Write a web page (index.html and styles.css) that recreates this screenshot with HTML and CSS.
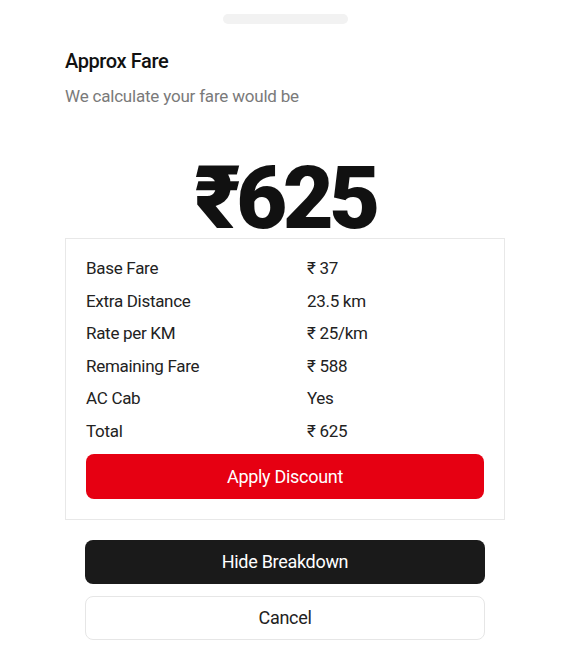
FILE: index.html
```html
<!DOCTYPE html>
<html>

<head>
    <title>Approx Fare</title>
    <link rel="stylesheet" href="styles.css">
</head>

<body>
    <div class="sheet">
        <div class="handle"></div>

        <h1 class="title">Approx Fare</h1>
        <p class="subtitle">We calculate your fare would be</p>

        <div class="amount">₹625</div>

        <div class="breakdown">
            <div class="rows">
                <span>Base Fare</span><span>₹ 37</span>
                <span>Extra Distance</span><span>23.5 km</span>
                <span>Rate per KM</span><span>₹ 25/km</span>
                <span>Remaining Fare</span><span>₹ 588</span>
                <span>AC Cab</span><span>Yes</span>
                <span>Total</span><span>₹ 625</span>
            </div>
            <div class="btn btn-red">Apply Discount</div>
        </div>

        <div class="actions">
            <div class="btn btn-dark">Hide Breakdown</div>
            <div class="btn btn-light">Cancel</div>
        </div>
    </div>
</body>

</html>
```

FILE: styles.css
```css
body {
    margin: 0;
    background: #ffffff;
    font-family: Roboto, "Noto Sans", sans-serif;
    color: #1a1a1a;
}

.sheet {
    padding: 14px 59px 0 65px;
}

.handle {
    width: 125px;
    height: 10px;
    margin: 0 0 0 158px;
    border-radius: 5px;
    background-color: #f2f2f2;
}

.title {
    margin: 25px 0 0 0;
    font-size: 20px;
    line-height: 24px;
    font-weight: 500;
    letter-spacing: -0.4px;
    color: #111111;
}

.subtitle {
    margin: 11px 0 0 0;
    font-size: 17px;
    line-height: 24px;
    font-weight: 400;
    letter-spacing: -0.2px;
    color: #7a7a7a;
}

.amount {
    margin-top: 49px;
    width: 440px;
    text-align: center;
    font-size: 88px;
    line-height: 81px;
    font-weight: 900;
    letter-spacing: -4.5px;
    color: #111111;
}

.breakdown {
    width: 398px;
    padding: 13px 20px 20px 20px;
    border: 1px solid #e8e8e8;
}

.rows {
    display: grid;
    grid-template-columns: 221px 1fr;
    grid-auto-rows: 32.5px;
    align-items: center;
    font-size: 17px;
    letter-spacing: -0.3px;
    color: #222222;
}

.btn {
    height: 44px;
    border-radius: 8px;
    font-size: 18px;
    line-height: 44px;
    text-align: center;
    letter-spacing: -0.3px;
}

.btn-red {
    height: 45px;
    line-height: 45px;
    margin-top: 7px;
    background-color: #e60012;
    color: #ffffff;
}

.actions {
    width: 400px;
    margin: 20px 0 0 20px;
    display: flex;
    flex-direction: column;
    gap: 12px;
}

.btn-dark {
    background-color: #1a1a1a;
    color: #ffffff;
}

.btn-light {
    height: 42px;
    line-height: 42px;
    border: 1px solid #e6e6e6;
    background-color: #ffffff;
    color: #222222;
}
```
